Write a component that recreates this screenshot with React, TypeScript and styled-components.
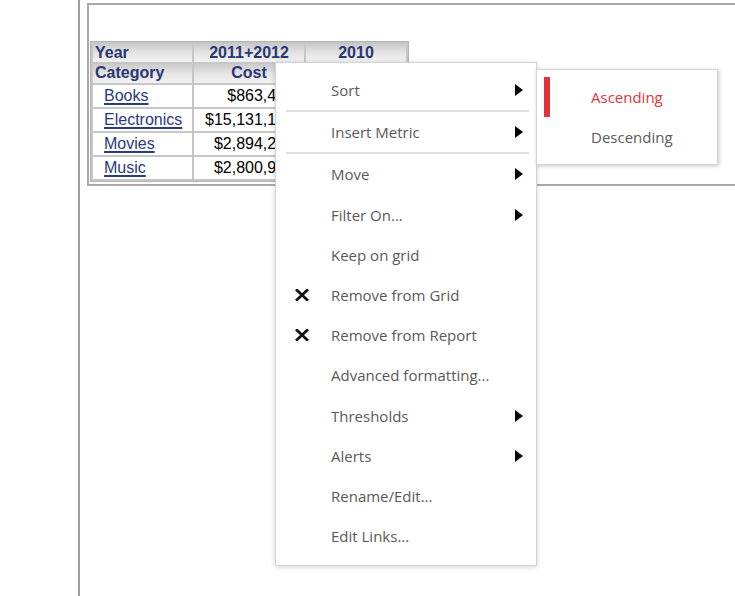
import React from "react";
import styled, { createGlobalStyle } from "styled-components";

const GlobalStyle = createGlobalStyle`
  html, body {
    margin: 0;
    padding: 0;
    background: #ffffff;
    overflow: hidden;
  }
  body {
    font-family: "Liberation Sans", Arial, sans-serif;
  }
`;

type Row = { category: string; cost: string; prev: string };

const rows: Row[] = [
  { category: "Books", cost: "$863,438", prev: "$412,906" },
  { category: "Electronics", cost: "$15,131,175", prev: "$7,208,310" },
  { category: "Movies", cost: "$2,894,213", prev: "$1,392,441" },
  { category: "Music", cost: "$2,800,929", prev: "$1,310,628" },
];

type MenuEntry = {
  label: string;
  sub?: boolean;
  remove?: boolean;
  divider?: boolean;
};

const menu: MenuEntry[] = [
  { label: "Sort", sub: true, divider: true },
  { label: "Insert Metric", sub: true, divider: true },
  { label: "Move", sub: true },
  { label: "Filter On...", sub: true },
  { label: "Keep on grid" },
  { label: "Remove from Grid", remove: true },
  { label: "Remove from Report", remove: true },
  { label: "Advanced formatting..." },
  { label: "Thresholds", sub: true },
  { label: "Alerts", sub: true },
  { label: "Rename/Edit..." },
  { label: "Edit Links..." },
];

const CrossIcon = () => (
  <svg width="14" height="12" viewBox="0 0 14 12">
    <path d="M2 1.3 L12 10.7 M12 1.3 L2 10.7" stroke="#111" strokeWidth="2.8" strokeLinecap="square" />
  </svg>
);

const ArrowIcon = () => (
  <svg width="8" height="12" viewBox="0 0 8 12">
    <path d="M0 0 L8 6 L0 12 Z" fill="#000" />
  </svg>
);

const App = () => {
  return (
    <Page>
      <GlobalStyle />
      <SideRail />
      <Content>
        <ReportBox>
          <BoxTitle />
          <Grid>
            <thead>
              <tr>
                <HeadCell $align="left">Year</HeadCell>
                <HeadCell>2011+2012</HeadCell>
                <HeadCell>2010</HeadCell>
              </tr>
              <tr>
                <HeadCell $align="left" $tall>Category</HeadCell>
                <HeadCell $tall>Cost</HeadCell>
                <HeadCell $tall>Cost</HeadCell>
              </tr>
            </thead>
            <tbody>
              {rows.map((r) => (
                <tr key={r.category}>
                  <LabelCell>
                    <CatLink href="#">{r.category}</CatLink>
                  </LabelCell>
                  <ValueCell>{r.cost}</ValueCell>
                  <ValueCell>{r.prev}</ValueCell>
                </tr>
              ))}
            </tbody>
          </Grid>
        </ReportBox>
      </Content>

      <ContextMenu>
        {menu.map((m) => (
          <React.Fragment key={m.label}>
            <MenuItem>
              <IconSlot>{m.remove && <CrossIcon />}</IconSlot>
              <MenuLabel>{m.label}</MenuLabel>
              <ArrowSlot>{m.sub && <ArrowIcon />}</ArrowSlot>
            </MenuItem>
            {m.divider && <Divider />}
          </React.Fragment>
        ))}
      </ContextMenu>

      <SubMenu>
        <SubItem $active>
          <ActiveBar />
          Ascending
        </SubItem>
        <SubItem>Descending</SubItem>
      </SubMenu>
    </Page>
  );
};

export default App;

const Page = styled.div`
  position: relative;
  display: flex;
  width: 735px;
  height: 596px;
  overflow: hidden;
`;

const SideRail = styled.div`
  width: 78px;
  flex-shrink: 0;
  border-right: 2px solid #9c9c9c;
`;

const Content = styled.div`
  flex: 1;
  padding: 3px 0 0 7px;
  min-width: 0;
`;

const ReportBox = styled.div`
  width: 900px;
  border: 2px solid #a9a9a9;
  padding: 0 0 2px 1px;
`;

const BoxTitle = styled.div`
  height: 36px;
`;

const Grid = styled.table`
  border: 1px solid #b4b4b4;
  border-spacing: 2px;
  background: #c6c6c6;
  font-size: 16px;
  line-height: 18px;
`;

const HeadCell = styled.th<{ $align?: string; $tall?: boolean }>`
  height: ${(p) => (p.$tall ? "19px" : "18px")};
  padding: 0 2px;
  text-align: ${(p) => p.$align || "center"};
  vertical-align: top;
  font-weight: bold;
  color: #283675;
  background: linear-gradient(to bottom, #cbcbcb 0%, #e6e6e6 55%, #f2f2f2 100%);
  white-space: nowrap;
  &:nth-child(1) {
    width: 95px;
  }
  &:nth-child(2) {
    width: 106px;
  }
  &:nth-child(3) {
    width: 96px;
  }
`;

const LabelCell = styled.td`
  height: 22px;
  padding: 0 0 0 11px;
  background: #ffffff;
  white-space: nowrap;
`;

const ValueCell = styled.td`
  height: 22px;
  padding: 0 10px 0 0;
  background: #ffffff;
  text-align: right;
  color: #000;
  white-space: nowrap;
`;

const CatLink = styled.a`
  color: #2a3a7c;
  text-decoration: underline;
  text-decoration-thickness: 2px;
  text-underline-offset: 2px;
`;

const ContextMenu = styled.div`
  position: absolute;
  left: 275px;
  top: 62px;
  width: 260px;
  padding: 7px 0 9px;
  background: #ffffff;
  border: 1px solid #d4d4d4;
  box-shadow: 0 1px 5px rgba(0, 0, 0, 0.18);
  font-family: "Open Sans", sans-serif;
  font-size: 15px;
  color: #595959;
`;

const MenuItem = styled.div`
  display: flex;
  align-items: center;
  height: 40.2px;
`;

const IconSlot = styled.div`
  width: 56px;
  flex-shrink: 0;
  display: flex;
  align-items: center;
  padding-left: 19px;
  box-sizing: border-box;
`;

const MenuLabel = styled.span`
  flex: 1;
  white-space: nowrap;
  margin-left: -1px;
`;

const ArrowSlot = styled.div`
  width: 21px;
  flex-shrink: 0;
  display: flex;
  align-items: center;
`;

const Divider = styled.div`
  height: 2px;
  margin: 0 7px 0 10px;
  background: #dedede;
`;

const SubMenu = styled.div`
  position: absolute;
  left: 536px;
  top: 69px;
  width: 180px;
  padding: 7px 0;
  background: #ffffff;
  border: 1px solid #d4d4d4;
  box-shadow: 1px 1px 4px rgba(0, 0, 0, 0.22);
  font-family: "Open Sans", sans-serif;
  font-size: 15px;
`;

const SubItem = styled.div<{ $active?: boolean }>`
  position: relative;
  display: flex;
  align-items: center;
  height: 40px;
  padding-left: 54px;
  color: ${(p) => (p.$active ? "#e2333b" : "#595959")};
`;

const ActiveBar = styled.span`
  position: absolute;
  left: 7px;
  top: 0;
  width: 6px;
  height: 40px;
  background: #e3323a;
`;
